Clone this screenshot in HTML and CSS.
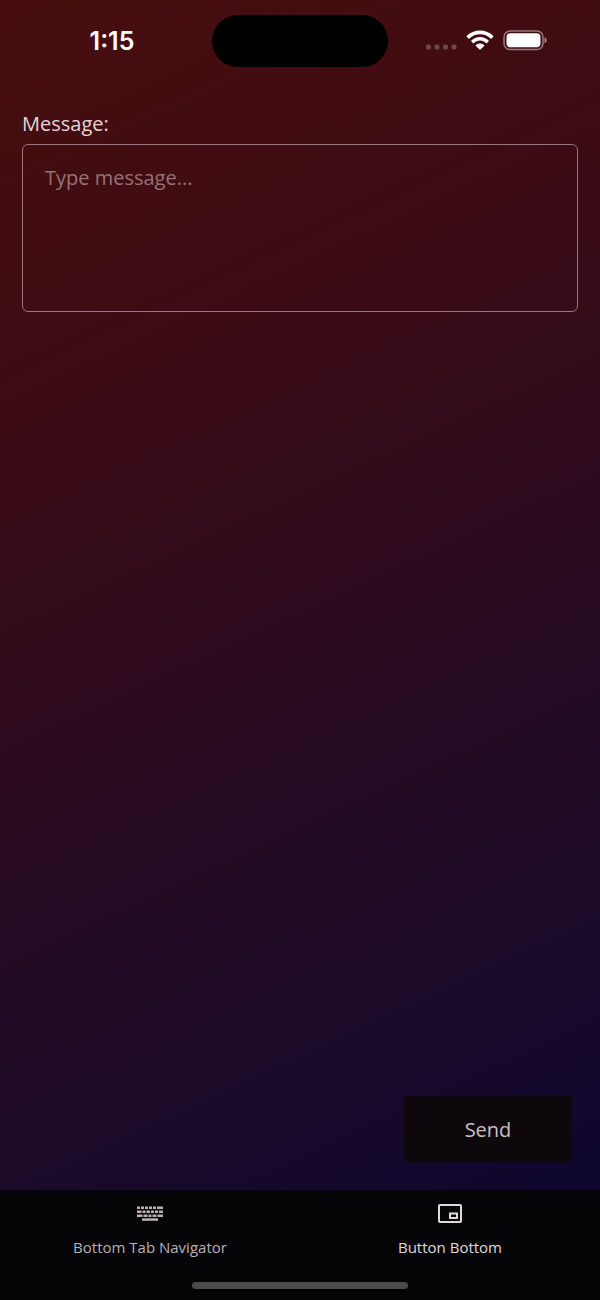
FILE: index.html
```html
<!DOCTYPE html>
<html lang="en">
<head>
  <meta charset="UTF-8" />
  <meta name="viewport" content="width=device-width, initial-scale=1" />
  <title>Button Bottom</title>
  <link rel="stylesheet" href="styles.css">
</head>
<body>
  <header class="status-bar">
    <time class="clock">1:15</time>
    <div class="island"></div>
    <div class="status-icons">
      <svg width="32" height="22" viewBox="0 0 32 22" fill="#fff" fill-opacity="0.25">
        <rect x="1" y="14.500" width="5" height="5" rx="2" />
        <rect x="9.500" y="14.500" width="5" height="5" rx="2" />
        <rect x="18" y="14.500" width="5" height="5" rx="2" />
        <rect x="26.500" y="14.500" width="5" height="5" rx="2" />
      </svg>
      <svg width="28" height="22" viewBox="0 0 28 22" fill="#fff">
        <path d="M14 .5C8.900.5 4.200 2.500.8 5.800c-.3.300-.3.700 0 1l1.600 1.600c.3.300.7.300 1 0C6.200 5.700 9.900 4.200 14 4.200s7.800 1.500 10.600 4.200c.3.300.7.300 1 0l1.600-1.600c.3-.3.300-.7 0-1C23.800 2.500 19.100.5 14 .5z" />
        <path d="M14 7c-3.300 0-6.300 1.300-8.600 3.400-.3.300-.3.700 0 1L7 13c.3.300.7.300 1 0 1.600-1.500 3.700-2.400 6-2.400s4.400.9 6 2.400c.3.300.7.300 1 0l1.600-1.600c.3-.3.300-.7 0-1C20.300 8.300 17.300 7 14 7z" />
        <path d="M14 13.500c-1.600 0-3 .6-4.100 1.500-.3.300-.3.700 0 1l3.600 3.600c.3.300.7.300 1 0l3.600-3.600c.3-.3.300-.7 0-1-1.100-.9-2.500-1.500-4.100-1.500z" />
      </svg>
      <svg width="44" height="22" viewBox="0 0 44 22">
        <rect x="1" y="1" width="39" height="18.500" rx="6" fill="none" stroke="#fff" stroke-opacity="0.45" stroke-width="1.500" />
        <rect x="3.500" y="3.300" width="34" height="14" rx="4" fill="#fff" />
        <path d="M41.500 7.300c1.500.6 2.200 1.700 2.200 3s-.7 2.400-2.200 3z" fill="#fff" fill-opacity="0.500" />
      </svg>
    </div>
  </header>

  <main class="screen">
    <form class="message-form">
      <label class="message-label" for="message">Message:</label>
      <textarea class="message-input" id="message" placeholder="Type message..."></textarea>
      <button class="send-button" type="button">Send</button>
    </form>
  </main>

  <nav class="tab-bar">
    <div class="tabs">
      <a class="tab" href="#navigator">
        <svg width="28" height="26" viewBox="0 0 28 26" fill="currentColor">
          <path d="M1 6.500h3v2.500H1zM5 6.500h3v2.500H5zM9 6.500h3v2.500H9zM13 6.500h3v2.500h-3zM17 6.500h3v2.500h-3zM21 6.500h6v2.500h-6z" />
          <path d="M1 10.500h4.500v2.500H1zM6.500 10.500h3v2.500h-3zM10.500 10.500h3.500v2.500h-3.500zM15 10.500h3v2.500h-3zM19 10.500h3v2.500h-3zM23 10.500h4v2.500h-4z" />
          <path d="M1 14.500h5.500v2.500H1zM7.500 14.500H11.500v2.500H7.500zM12.500 14.500h3v2.500h-3zM16.500 14.500h4v2.500h-4zM21.500 14.500H27v2.500h-5.500z" />
          <path d="M6 18.300h16v2.500H6z" />
        </svg>
        <span>Bottom Tab Navigator</span>
      </a>
      <a class="tab active" href="#button">
        <svg width="28" height="26" viewBox="0 0 28 26" fill="none" stroke="currentColor">
          <rect x="3" y="5" width="22" height="17" rx="1" stroke-width="2" />
          <rect x="14" y="13.500" width="7" height="4.500" stroke-width="2" />
        </svg>
        <span>Button Bottom</span>
      </a>
    </div>
    <div class="home-indicator"></div>
  </nav>
</body>
</html>
```

FILE: styles.css
```css
* {
  box-sizing: border-box;
}

body {
  margin: 0;
  min-height: 100vh;
  display: flex;
  flex-direction: column;
  font-family: "Open Sans", "Noto Sans", sans-serif;
  color: #e0d6d9;
  background: linear-gradient(155deg, #480e0e 0%, #3b0b14 28%, #280a20 54%, #1a0a29 76%, #0d062f 95%);
}

/* status bar */
.status-bar {
  display: grid;
  grid-template-columns: 1fr 176px 1fr;
  align-items: center;
  padding-top: 15px;
}

.clock {
  padding-left: 12px;
  text-align: center;
  font: 600 25px/30px Inter, sans-serif;
  color: #fff;
}

.island {
  height: 52px;
  border-radius: 26px;
  background: #000;
}

.status-icons {
  display: flex;
  justify-content: flex-end;
  gap: 9px;
  padding-right: 53px;
}

/* form */
.screen {
  flex: 1;
  display: flex;
  padding: 44px 22px 28px;
}

.message-form {
  flex: 1;
  display: flex;
  flex-direction: column;
}

.message-label {
  font-size: 20px;
  line-height: 26px;
  margin-bottom: 7px;
}

.message-input {
  height: 168px;
  padding: 20px 22px;
  border: 1px solid #95777d;
  border-radius: 6px;
  background: transparent;
  color: inherit;
  font: inherit;
  font-size: 20px;
  line-height: 26px;
  resize: none;
}

.message-input::placeholder {
  color: #957378;
}

.send-button {
  align-self: flex-end;
  width: 168px;
  height: 66px;
  margin: auto 6px 0 0;
  border: 0;
  background: #0e070b;
  color: #c8c0c4;
  font: inherit;
  font-size: 20px;
}

/* tab bar */
.tab-bar {
  padding: 10px 0 11px;
  background: #050407;
}

.tabs {
  display: flex;
}

.tab {
  flex: 1;
  display: flex;
  flex-direction: column;
  align-items: center;
  gap: 10px;
  color: #b8b1b5;
  font-size: 15px;
  line-height: 22px;
  text-decoration: none;
}

.tab.active {
  color: #e0d9dd;
}

.home-indicator {
  width: 36%;
  height: 7px;
  margin: 24px auto 0;
  border-radius: 4px;
  background: #4b4a4c;
}
```
